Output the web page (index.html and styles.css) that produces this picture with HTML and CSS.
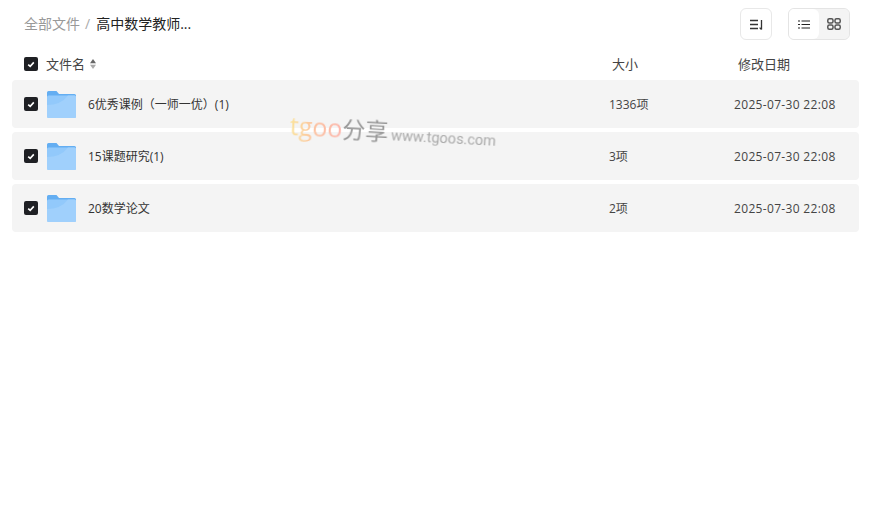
FILE: index.html
```html
<!DOCTYPE html>
<html lang="zh-CN">
<head>
    <meta charset="UTF-8">
    <meta name="viewport" content="width=device-width, initial-scale=1.0">
    <title>全部文件</title>
    <link rel="stylesheet" href="styles.css">
</head>
<body>
    <!-- 顶部 -->
    <header class="toolbar">
        <div class="crumbs">
            <span class="crumb-root">全部文件</span>
            <span class="crumb-sep">/</span>
            <span class="crumb-current">高中数学教师...</span>
        </div>
        <div class="tools">
            <button class="tool-btn">
                <svg width="13" height="11" viewBox="0 0 13 11" fill="none" stroke="#333" stroke-width="1.3">
                    <path d="M0 1.5H8M0 5.5H8M0 9.5H8"/>
                    <path d="M11.5 1V10.5M9.6 8.6L11.5 10.5"/>
                </svg>
            </button>
            <div class="view-switch">
                <button class="view-btn active">
                    <svg width="12" height="9" viewBox="0 0 12 9" fill="none" stroke="#222" stroke-width="1.2">
                        <path d="M0 1H2M0 4.5H2M0 8H2M3.5 1H12M3.5 4.5H12M3.5 8H12"/>
                    </svg>
                </button>
                <button class="view-btn">
                    <svg width="14" height="12" viewBox="0 0 14 12" fill="none" stroke="#555" stroke-width="1.5">
                        <rect x="0.8" y="0.8" width="5.2" height="4.2" rx="1.5"/>
                        <rect x="8" y="0.8" width="5.2" height="4.2" rx="1.5"/>
                        <rect x="0.8" y="7" width="5.2" height="4.2" rx="1.5"/>
                        <rect x="8" y="7" width="5.2" height="4.2" rx="1.5"/>
                    </svg>
                </button>
            </div>
        </div>
    </header>

    <!-- 表头 -->
    <div class="list-head">
        <span class="check"><svg width="8" height="7" viewBox="0 0 8 7"><path d="M1.2 3.6L3.2 5.4L6.8 1.4" fill="none" stroke="#fff" stroke-width="1.6"/></svg></span>
        <span class="head-name">文件名</span>
        <svg class="sort-icon" width="6" height="10" viewBox="0 0 6 10">
            <path d="M3 0L6 4.2H0Z" fill="#666"/>
            <path d="M3 10L0 5.8H6Z" fill="#aaa"/>
        </svg>
        <span class="head-size">大小</span>
        <span class="head-date">修改日期</span>
    </div>

    <!-- 文件列表 -->
    <div class="file-list">
        <div class="file-row">
            <span class="check"><svg width="8" height="7" viewBox="0 0 8 7"><path d="M1.2 3.6L3.2 5.4L6.8 1.4" fill="none" stroke="#fff" stroke-width="1.6"/></svg></span>
            <svg class="folder" width="29" height="27" viewBox="0 0 29 27">
                <path d="M0 1.5Q0 0 1.5 0H9.5L12 3H27.5Q29 3 29 4.5V10H0Z" fill="#64aef2"/>
                <rect y="4.5" width="29" height="22.5" rx="1.5" fill="#92c9fb"/>
                <path d="M0 26V14Q14 14 21 4.5H27.5Q29 4.5 29 6V25.5Q29 27 27.5 27H1.5Z" fill="#a0d0fc"/>
            </svg>
            <span class="file-name">6优秀课例（一师一优）(1)</span>
            <span class="file-size">1336项</span>
            <span class="file-date">2025-07-30 22:08</span>
        </div>
        <div class="file-row">
            <span class="check"><svg width="8" height="7" viewBox="0 0 8 7"><path d="M1.2 3.6L3.2 5.4L6.8 1.4" fill="none" stroke="#fff" stroke-width="1.6"/></svg></span>
            <svg class="folder" width="29" height="27" viewBox="0 0 29 27">
                <path d="M0 1.5Q0 0 1.5 0H9.5L12 3H27.5Q29 3 29 4.5V10H0Z" fill="#64aef2"/>
                <rect y="4.5" width="29" height="22.5" rx="1.5" fill="#92c9fb"/>
                <path d="M0 26V14Q14 14 21 4.5H27.5Q29 4.5 29 6V25.5Q29 27 27.5 27H1.5Z" fill="#a0d0fc"/>
            </svg>
            <span class="file-name">15课题研究(1)</span>
            <span class="file-size">3项</span>
            <span class="file-date">2025-07-30 22:08</span>
        </div>
        <div class="file-row">
            <span class="check"><svg width="8" height="7" viewBox="0 0 8 7"><path d="M1.2 3.6L3.2 5.4L6.8 1.4" fill="none" stroke="#fff" stroke-width="1.6"/></svg></span>
            <svg class="folder" width="29" height="27" viewBox="0 0 29 27">
                <path d="M0 1.5Q0 0 1.5 0H9.5L12 3H27.5Q29 3 29 4.5V10H0Z" fill="#64aef2"/>
                <rect y="4.5" width="29" height="22.5" rx="1.5" fill="#92c9fb"/>
                <path d="M0 26V14Q14 14 21 4.5H27.5Q29 4.5 29 6V25.5Q29 27 27.5 27H1.5Z" fill="#a0d0fc"/>
            </svg>
            <span class="file-name">20数学论文</span>
            <span class="file-size">2项</span>
            <span class="file-date">2025-07-30 22:08</span>
        </div>
    </div>

    <!-- 水印 -->
    <div class="watermark">
        <span class="wm-logo">tgoo</span><span class="wm-cn">分享</span>
        <span class="wm-url">www.tgoos.com</span>
    </div>
</body>
</html>
```

FILE: styles.css
```css
body {
    font-family: "Open Sans", "Noto Sans CJK SC", sans-serif;
    background-color: #fff;
    color: #333;
    margin: 0;
    padding: 0;
}

.toolbar {
    display: flex;
    justify-content: space-between;
    align-items: center;
    height: 32px;
    padding: 8px 24px 0 24px;
}

.crumbs {
    display: flex;
    align-items: center;
    margin-bottom: 2px;
    font-size: 14px;
}

.crumb-root {
    color: #999;
}

.crumb-sep {
    color: #aaa;
    margin: 0 6px 0 5px;
}

.crumb-current {
    color: #222;
}

.tools {
    display: flex;
    gap: 16px;
}

button {
    padding: 0;
    cursor: pointer;
    display: flex;
    align-items: center;
    justify-content: center;
    background-color: #fff;
    border: none;
}

.tool-btn {
    width: 32px;
    height: 32px;
    box-sizing: border-box;
    border: 1px solid #e8e8e8;
    border-radius: 6px;
}

.view-switch {
    display: flex;
    box-sizing: border-box;
    width: 62px;
    height: 32px;
    border: 1px solid #e4e4e4;
    border-radius: 6px;
    overflow: hidden;
    background-color: #f4f4f4;
}

.view-btn {
    flex: 1;
    background-color: #f4f4f4;
}

.view-btn.active {
    background-color: #fff;
    border-radius: 0 6px 6px 0;
}

.list-head {
    display: flex;
    align-items: center;
    height: 32px;
    margin-top: 8px;
    padding-left: 24px;
    font-size: 13px;
    color: #444;
}

.list-head span:not(.check) {
    padding-bottom: 2px;
}

.check {
    display: flex;
    align-items: center;
    justify-content: center;
    flex-shrink: 0;
    width: 14px;
    height: 14px;
    border-radius: 2px;
    background-color: #1f2024;
}

.head-name {
    margin-left: 8px;
}

.sort-icon {
    margin-left: 5px;
}

.head-size {
    margin-left: auto;
    width: 126px;
}

.head-date {
    width: 136px;
}

.file-list {
    display: flex;
    flex-direction: column;
    gap: 4px;
    margin: 0 15px 0 12px;
}

.file-row {
    display: flex;
    align-items: center;
    height: 48px;
    padding-left: 12px;
    background-color: #f4f4f4;
    border-radius: 4px;
    font-size: 12px;
    color: #444;
}

.folder {
    margin-left: 9px;
}

.file-name {
    margin-left: 12px;
    color: #333;
}

.file-size {
    margin-left: auto;
    width: 125px;
}

.file-date {
    width: 125px;
    letter-spacing: 0.33px;
}

/* 盖在列表上的水印 */
.watermark {
    position: absolute;
    left: 290px;
    top: 108px;
    display: flex;
    align-items: baseline;
    white-space: nowrap;
    transform: rotate(3deg);
    transform-origin: left center;
    filter: blur(0.3px);
    color: #999;
    pointer-events: none;
}

.wm-logo {
    font-family: "Open Sans", sans-serif;
    font-size: 25px;
    background: linear-gradient(90deg, #fbe39a, #fcc0a0 50%, #fdb5ac);
    -webkit-background-clip: text;
    background-clip: text;
    color: transparent;
}

.wm-cn {
    font-size: 23px;
    color: #999;
}

.wm-url {
    font-family: Roboto, sans-serif;
    font-size: 14.5px;
    margin-left: 3px;
    color: #aaa;
}
```
